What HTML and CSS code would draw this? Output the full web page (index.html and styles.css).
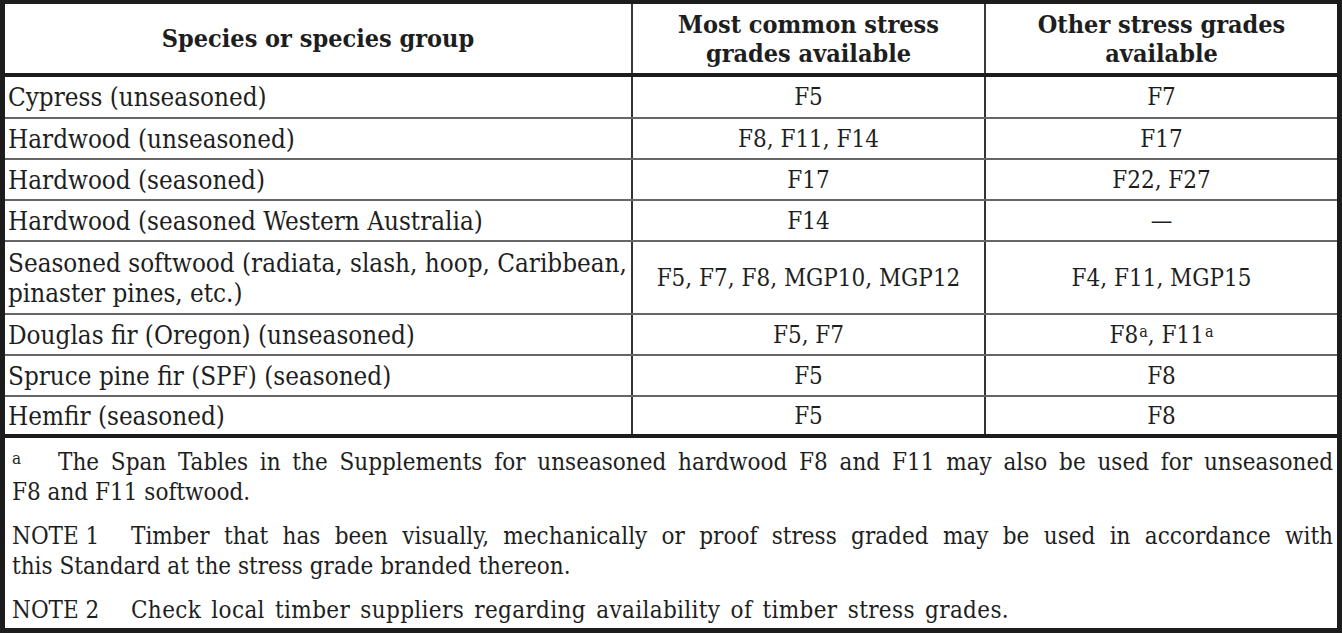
FILE: index.html
```html
<!DOCTYPE html>
<html lang="en">
<head>
<meta charset="utf-8">
<title>Stress grades</title>
<link rel="stylesheet" href="styles.css">
</head>
<body>
<div class="frame">
  <table class="grades">
    <colgroup>
      <col class="c1">
      <col class="c2">
      <col class="c3">
    </colgroup>
    <thead>
      <tr>
        <th>Species or species group</th>
        <th>Most common stress<br>grades available</th>
        <th>Other stress grades<br>available</th>
      </tr>
    </thead>
    <tbody>
      <tr class="first"><td>Cypress (unseasoned)</td><td>F5</td><td>F7</td></tr>
      <tr><td>Hardwood (unseasoned)</td><td>F8, F11, F14</td><td>F17</td></tr>
      <tr><td>Hardwood (seasoned)</td><td>F17</td><td>F22, F27</td></tr>
      <tr><td>Hardwood (seasoned Western Australia)</td><td>F14</td><td>—</td></tr>
      <tr class="tall"><td>Seasoned softwood (radiata, slash, hoop, Caribbean,<br>pinaster pines, etc.)</td><td>F5, F7, F8, MGP10, MGP12</td><td>F4, F11, MGP15</td></tr>
      <tr><td>Douglas fir (Oregon) (unseasoned)</td><td>F5, F7</td><td>F8<sup>a</sup>, F11<sup>a</sup></td></tr>
      <tr><td>Spruce pine fir (SPF) (seasoned)</td><td>F5</td><td>F8</td></tr>
      <tr class="last"><td>Hemfir (seasoned)</td><td>F5</td><td>F8</td></tr>
    </tbody>
  </table>
  <div class="notes">
    <div class="note">
      <div class="row"><span class="fn">a</span><span class="just">The Span Tables in the Supplements for unseasoned hardwood F8 and F11 may also be used for unseasoned</span></div>
      <div class="cont">F8 and F11 softwood.</div>
    </div>
    <div class="note">
      <div class="row"><span class="lbl">NOTE 1</span><span class="just">Timber that has been visually, mechanically or proof stress graded may be used in accordance with</span></div>
      <div class="cont">this Standard at the stress grade branded thereon.</div>
    </div>
    <div class="note">
      <div class="row"><span class="lbl">NOTE 2</span><span class="txt">Check local timber suppliers regarding availability of timber stress grades.</span></div>
    </div>
  </div>
</div>
</body>
</html>
```

FILE: styles.css
```css
html, body {
  margin: 0;
  padding: 0;
  background: #ffffff;
}

body {
  width: 1342px;
  height: 635px;
  overflow: hidden;
  font-family: "DejaVu Serif Condensed", "DejaVu Serif", "Liberation Serif", serif;
  font-stretch: condensed;
  color: #1e1e1e;
}

.frame {
  width: 1342px;
  height: 633px;
  box-sizing: border-box;
  border: 5px solid #1c1c1c;
  border-top-width: 4px;
  display: flex;
  flex-direction: column;
}

.grades {
  width: 100%;
  border-collapse: collapse;
  table-layout: fixed;
}

.c1 { width: 627px; }
.c2 { width: 353px; }
.c3 { width: auto; }

.grades th {
  height: 69px;
  padding: 0;
  font-size: 25px;
  font-weight: bold;
  line-height: 29px;
  text-align: center;
  vertical-align: middle;
  border-bottom: 4px solid #1c1c1c;
  border-left: 2px solid #3a3a3a;
}

.grades td {
  height: 39px;
  padding: 0;
  font-size: 24px;
  line-height: 30px;
  text-align: center;
  vertical-align: middle;
  border-bottom: 2px solid #666666;
  border-left: 2px solid #333333;
}

.grades th:first-child,
.grades td:first-child {
  border-left: 0;
}

.grades td:first-child {
  text-align: left;
  padding-left: 3px;
  font-size: 25.8px;
}

.grades tr.first td {
  height: 40px;
}

.grades tr.tall td {
  height: 71px;
}

.grades tr.last td {
  height: 37px;
  border-bottom: 4px solid #1c1c1c;
}

.grades sup {
  font-size: 16px;
  line-height: 1;
  vertical-align: 6px;
  margin-left: 1px;
}

.notes {
  flex: 1;
  padding: 9px 4px 0 7px;
}

.note {
  margin: 0 0 14px 0;
  font-size: 24px;
  line-height: 30px;
}

.row {
  display: flex;
  align-items: baseline;
}

.just {
  flex: 1;
  text-align: justify;
  text-align-last: justify;
}

.txt {
  flex: 1;
  word-spacing: 3px;
  letter-spacing: 0.35px;
}

.fn {
  flex: 0 0 46px;
  align-self: flex-start;
  font-size: 17px;
  line-height: 22px;
}

.lbl {
  flex: 0 0 119px;
}
```
